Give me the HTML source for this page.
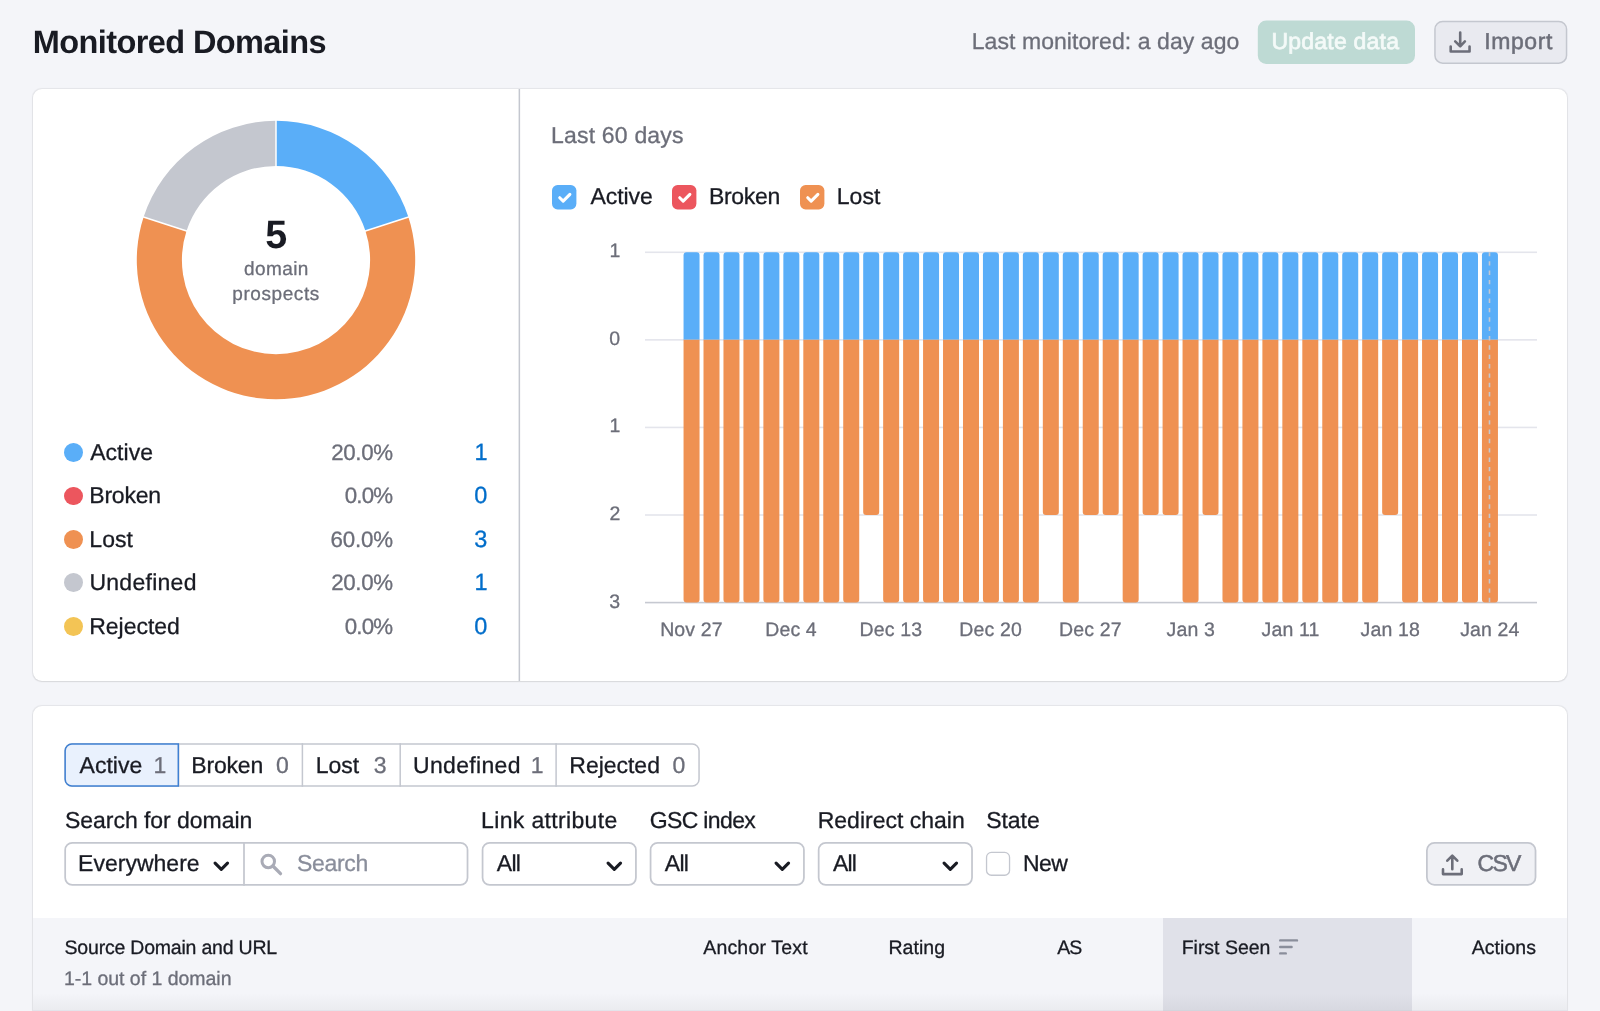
<!DOCTYPE html>
<html lang="en"><head><meta charset="utf-8"><title>Monitored Domains</title>
<style>
*{box-sizing:border-box;margin:0;padding:0}
html,body{width:1600px;height:1011px;overflow:hidden;background:#f4f5f9}
body{position:relative;font-family:"Liberation Sans",sans-serif;color:#191b23;font-size:22px}
.t{position:absolute;white-space:nowrap;line-height:1;-webkit-text-stroke:0.3px}
.g{color:#6c6e79}
.b{color:#006dca}
.card{position:absolute;background:#fff;border-radius:9px;box-shadow:0 0 1px 0.5px rgba(25,27,35,.07),0 1px 2px rgba(25,27,35,.07)}
.dot{position:absolute;width:18.8px;height:18.8px;border-radius:50%}
svg{position:absolute;left:0;top:0;overflow:visible}
#r{position:absolute;left:0;top:0;width:1600px;height:1011px;will-change:transform;text-rendering:geometricPrecision}
</style></head><body><div id="r">
<div class="card" style="left:32.75px;top:88.75px;width:1534.4px;height:592.25px"></div>
<div class="card" style="left:32.75px;top:706px;width:1534.4px;height:330px"></div>
<div style="position:absolute;left:32.75px;top:917.6px;width:1534.4px;height:93.4px;background:#f4f5f9;border-bottom:1px solid #e3e4eb"></div>
<div style="position:absolute;left:1162.8px;top:917.6px;width:249.2px;height:93.4px;background:#e0e1e9;border-bottom:1px solid #d3d5dd"></div>
<div style="position:absolute;left:33px;top:993px;width:1534px;height:17px;background:linear-gradient(to bottom,rgba(25,27,35,0),rgba(25,27,35,.045))"></div>
<svg width="1600" height="1011" viewBox="0 0 1600 1011">
<path fill="#5aaef8" d="M276.00 120.85A139.2 139.2 0 0 1 408.39 217.03L365.49 230.97A94.1 94.1 0 0 0 276.00 165.95Z"/><path fill="#ef9152" d="M408.39 217.03A139.2 139.2 0 1 1 143.61 217.03L186.51 230.97A94.1 94.1 0 1 0 365.49 230.97Z"/><path fill="#c4c7cf" d="M143.61 217.03A139.2 139.2 0 0 1 276.00 120.85L276.00 165.95A94.1 94.1 0 0 0 186.51 230.97Z"/><line x1="276.00" y1="166.95" x2="276.00" y2="119.85" stroke="#fff" stroke-width="1.5"/><line x1="364.54" y1="231.28" x2="409.34" y2="216.73" stroke="#fff" stroke-width="1.5"/><line x1="187.46" y1="231.28" x2="142.66" y2="216.73" stroke="#fff" stroke-width="1.5"/>
<rect x="645" y="251.50" width="892" height="1.6" fill="#e4e5ec"/><rect x="645" y="339.07" width="892" height="1.6" fill="#e4e5ec"/><rect x="645" y="426.64" width="892" height="1.6" fill="#e4e5ec"/><rect x="645" y="514.21" width="892" height="1.6" fill="#e4e5ec"/><rect x="645" y="601.78" width="892" height="1.6" fill="#c6c9d1"/><path fill="#5aaef8" d="M683.55 339.87V255.30a3 3 0 0 1 3 -3h10a3 3 0 0 1 3 3V339.87z"/><path fill="#ef9152" d="M683.55 339.87V599.58a3 3 0 0 0 3 3h10a3 3 0 0 0 3 -3V339.87z"/><path fill="#5aaef8" d="M703.51 339.87V255.30a3 3 0 0 1 3 -3h10a3 3 0 0 1 3 3V339.87z"/><path fill="#ef9152" d="M703.51 339.87V599.58a3 3 0 0 0 3 3h10a3 3 0 0 0 3 -3V339.87z"/><path fill="#5aaef8" d="M723.47 339.87V255.30a3 3 0 0 1 3 -3h10a3 3 0 0 1 3 3V339.87z"/><path fill="#ef9152" d="M723.47 339.87V599.58a3 3 0 0 0 3 3h10a3 3 0 0 0 3 -3V339.87z"/><path fill="#5aaef8" d="M743.43 339.87V255.30a3 3 0 0 1 3 -3h10a3 3 0 0 1 3 3V339.87z"/><path fill="#ef9152" d="M743.43 339.87V599.58a3 3 0 0 0 3 3h10a3 3 0 0 0 3 -3V339.87z"/><path fill="#5aaef8" d="M763.39 339.87V255.30a3 3 0 0 1 3 -3h10a3 3 0 0 1 3 3V339.87z"/><path fill="#ef9152" d="M763.39 339.87V599.58a3 3 0 0 0 3 3h10a3 3 0 0 0 3 -3V339.87z"/><path fill="#5aaef8" d="M783.35 339.87V255.30a3 3 0 0 1 3 -3h10a3 3 0 0 1 3 3V339.87z"/><path fill="#ef9152" d="M783.35 339.87V599.58a3 3 0 0 0 3 3h10a3 3 0 0 0 3 -3V339.87z"/><path fill="#5aaef8" d="M803.31 339.87V255.30a3 3 0 0 1 3 -3h10a3 3 0 0 1 3 3V339.87z"/><path fill="#ef9152" d="M803.31 339.87V599.58a3 3 0 0 0 3 3h10a3 3 0 0 0 3 -3V339.87z"/><path fill="#5aaef8" d="M823.27 339.87V255.30a3 3 0 0 1 3 -3h10a3 3 0 0 1 3 3V339.87z"/><path fill="#ef9152" d="M823.27 339.87V599.58a3 3 0 0 0 3 3h10a3 3 0 0 0 3 -3V339.87z"/><path fill="#5aaef8" d="M843.23 339.87V255.30a3 3 0 0 1 3 -3h10a3 3 0 0 1 3 3V339.87z"/><path fill="#ef9152" d="M843.23 339.87V599.58a3 3 0 0 0 3 3h10a3 3 0 0 0 3 -3V339.87z"/><path fill="#5aaef8" d="M863.19 339.87V255.30a3 3 0 0 1 3 -3h10a3 3 0 0 1 3 3V339.87z"/><path fill="#ef9152" d="M863.19 339.87V512.01a3 3 0 0 0 3 3h10a3 3 0 0 0 3 -3V339.87z"/><path fill="#5aaef8" d="M883.15 339.87V255.30a3 3 0 0 1 3 -3h10a3 3 0 0 1 3 3V339.87z"/><path fill="#ef9152" d="M883.15 339.87V599.58a3 3 0 0 0 3 3h10a3 3 0 0 0 3 -3V339.87z"/><path fill="#5aaef8" d="M903.11 339.87V255.30a3 3 0 0 1 3 -3h10a3 3 0 0 1 3 3V339.87z"/><path fill="#ef9152" d="M903.11 339.87V599.58a3 3 0 0 0 3 3h10a3 3 0 0 0 3 -3V339.87z"/><path fill="#5aaef8" d="M923.07 339.87V255.30a3 3 0 0 1 3 -3h10a3 3 0 0 1 3 3V339.87z"/><path fill="#ef9152" d="M923.07 339.87V599.58a3 3 0 0 0 3 3h10a3 3 0 0 0 3 -3V339.87z"/><path fill="#5aaef8" d="M943.03 339.87V255.30a3 3 0 0 1 3 -3h10a3 3 0 0 1 3 3V339.87z"/><path fill="#ef9152" d="M943.03 339.87V599.58a3 3 0 0 0 3 3h10a3 3 0 0 0 3 -3V339.87z"/><path fill="#5aaef8" d="M962.99 339.87V255.30a3 3 0 0 1 3 -3h10a3 3 0 0 1 3 3V339.87z"/><path fill="#ef9152" d="M962.99 339.87V599.58a3 3 0 0 0 3 3h10a3 3 0 0 0 3 -3V339.87z"/><path fill="#5aaef8" d="M982.95 339.87V255.30a3 3 0 0 1 3 -3h10a3 3 0 0 1 3 3V339.87z"/><path fill="#ef9152" d="M982.95 339.87V599.58a3 3 0 0 0 3 3h10a3 3 0 0 0 3 -3V339.87z"/><path fill="#5aaef8" d="M1002.91 339.87V255.30a3 3 0 0 1 3 -3h10a3 3 0 0 1 3 3V339.87z"/><path fill="#ef9152" d="M1002.91 339.87V599.58a3 3 0 0 0 3 3h10a3 3 0 0 0 3 -3V339.87z"/><path fill="#5aaef8" d="M1022.87 339.87V255.30a3 3 0 0 1 3 -3h10a3 3 0 0 1 3 3V339.87z"/><path fill="#ef9152" d="M1022.87 339.87V599.58a3 3 0 0 0 3 3h10a3 3 0 0 0 3 -3V339.87z"/><path fill="#5aaef8" d="M1042.83 339.87V255.30a3 3 0 0 1 3 -3h10a3 3 0 0 1 3 3V339.87z"/><path fill="#ef9152" d="M1042.83 339.87V512.01a3 3 0 0 0 3 3h10a3 3 0 0 0 3 -3V339.87z"/><path fill="#5aaef8" d="M1062.79 339.87V255.30a3 3 0 0 1 3 -3h10a3 3 0 0 1 3 3V339.87z"/><path fill="#ef9152" d="M1062.79 339.87V599.58a3 3 0 0 0 3 3h10a3 3 0 0 0 3 -3V339.87z"/><path fill="#5aaef8" d="M1082.75 339.87V255.30a3 3 0 0 1 3 -3h10a3 3 0 0 1 3 3V339.87z"/><path fill="#ef9152" d="M1082.75 339.87V512.01a3 3 0 0 0 3 3h10a3 3 0 0 0 3 -3V339.87z"/><path fill="#5aaef8" d="M1102.71 339.87V255.30a3 3 0 0 1 3 -3h10a3 3 0 0 1 3 3V339.87z"/><path fill="#ef9152" d="M1102.71 339.87V512.01a3 3 0 0 0 3 3h10a3 3 0 0 0 3 -3V339.87z"/><path fill="#5aaef8" d="M1122.67 339.87V255.30a3 3 0 0 1 3 -3h10a3 3 0 0 1 3 3V339.87z"/><path fill="#ef9152" d="M1122.67 339.87V599.58a3 3 0 0 0 3 3h10a3 3 0 0 0 3 -3V339.87z"/><path fill="#5aaef8" d="M1142.63 339.87V255.30a3 3 0 0 1 3 -3h10a3 3 0 0 1 3 3V339.87z"/><path fill="#ef9152" d="M1142.63 339.87V512.01a3 3 0 0 0 3 3h10a3 3 0 0 0 3 -3V339.87z"/><path fill="#5aaef8" d="M1162.59 339.87V255.30a3 3 0 0 1 3 -3h10a3 3 0 0 1 3 3V339.87z"/><path fill="#ef9152" d="M1162.59 339.87V512.01a3 3 0 0 0 3 3h10a3 3 0 0 0 3 -3V339.87z"/><path fill="#5aaef8" d="M1182.55 339.87V255.30a3 3 0 0 1 3 -3h10a3 3 0 0 1 3 3V339.87z"/><path fill="#ef9152" d="M1182.55 339.87V599.58a3 3 0 0 0 3 3h10a3 3 0 0 0 3 -3V339.87z"/><path fill="#5aaef8" d="M1202.51 339.87V255.30a3 3 0 0 1 3 -3h10a3 3 0 0 1 3 3V339.87z"/><path fill="#ef9152" d="M1202.51 339.87V512.01a3 3 0 0 0 3 3h10a3 3 0 0 0 3 -3V339.87z"/><path fill="#5aaef8" d="M1222.47 339.87V255.30a3 3 0 0 1 3 -3h10a3 3 0 0 1 3 3V339.87z"/><path fill="#ef9152" d="M1222.47 339.87V599.58a3 3 0 0 0 3 3h10a3 3 0 0 0 3 -3V339.87z"/><path fill="#5aaef8" d="M1242.43 339.87V255.30a3 3 0 0 1 3 -3h10a3 3 0 0 1 3 3V339.87z"/><path fill="#ef9152" d="M1242.43 339.87V599.58a3 3 0 0 0 3 3h10a3 3 0 0 0 3 -3V339.87z"/><path fill="#5aaef8" d="M1262.39 339.87V255.30a3 3 0 0 1 3 -3h10a3 3 0 0 1 3 3V339.87z"/><path fill="#ef9152" d="M1262.39 339.87V599.58a3 3 0 0 0 3 3h10a3 3 0 0 0 3 -3V339.87z"/><path fill="#5aaef8" d="M1282.35 339.87V255.30a3 3 0 0 1 3 -3h10a3 3 0 0 1 3 3V339.87z"/><path fill="#ef9152" d="M1282.35 339.87V599.58a3 3 0 0 0 3 3h10a3 3 0 0 0 3 -3V339.87z"/><path fill="#5aaef8" d="M1302.31 339.87V255.30a3 3 0 0 1 3 -3h10a3 3 0 0 1 3 3V339.87z"/><path fill="#ef9152" d="M1302.31 339.87V599.58a3 3 0 0 0 3 3h10a3 3 0 0 0 3 -3V339.87z"/><path fill="#5aaef8" d="M1322.27 339.87V255.30a3 3 0 0 1 3 -3h10a3 3 0 0 1 3 3V339.87z"/><path fill="#ef9152" d="M1322.27 339.87V599.58a3 3 0 0 0 3 3h10a3 3 0 0 0 3 -3V339.87z"/><path fill="#5aaef8" d="M1342.23 339.87V255.30a3 3 0 0 1 3 -3h10a3 3 0 0 1 3 3V339.87z"/><path fill="#ef9152" d="M1342.23 339.87V599.58a3 3 0 0 0 3 3h10a3 3 0 0 0 3 -3V339.87z"/><path fill="#5aaef8" d="M1362.19 339.87V255.30a3 3 0 0 1 3 -3h10a3 3 0 0 1 3 3V339.87z"/><path fill="#ef9152" d="M1362.19 339.87V599.58a3 3 0 0 0 3 3h10a3 3 0 0 0 3 -3V339.87z"/><path fill="#5aaef8" d="M1382.15 339.87V255.30a3 3 0 0 1 3 -3h10a3 3 0 0 1 3 3V339.87z"/><path fill="#ef9152" d="M1382.15 339.87V512.01a3 3 0 0 0 3 3h10a3 3 0 0 0 3 -3V339.87z"/><path fill="#5aaef8" d="M1402.11 339.87V255.30a3 3 0 0 1 3 -3h10a3 3 0 0 1 3 3V339.87z"/><path fill="#ef9152" d="M1402.11 339.87V599.58a3 3 0 0 0 3 3h10a3 3 0 0 0 3 -3V339.87z"/><path fill="#5aaef8" d="M1422.07 339.87V255.30a3 3 0 0 1 3 -3h10a3 3 0 0 1 3 3V339.87z"/><path fill="#ef9152" d="M1422.07 339.87V599.58a3 3 0 0 0 3 3h10a3 3 0 0 0 3 -3V339.87z"/><path fill="#5aaef8" d="M1442.03 339.87V255.30a3 3 0 0 1 3 -3h10a3 3 0 0 1 3 3V339.87z"/><path fill="#ef9152" d="M1442.03 339.87V599.58a3 3 0 0 0 3 3h10a3 3 0 0 0 3 -3V339.87z"/><path fill="#5aaef8" d="M1461.99 339.87V255.30a3 3 0 0 1 3 -3h10a3 3 0 0 1 3 3V339.87z"/><path fill="#ef9152" d="M1461.99 339.87V599.58a3 3 0 0 0 3 3h10a3 3 0 0 0 3 -3V339.87z"/><path fill="#5aaef8" d="M1481.95 339.87V255.30a3 3 0 0 1 3 -3h10a3 3 0 0 1 3 3V339.87z"/><path fill="#ef9152" d="M1481.95 339.87V599.58a3 3 0 0 0 3 3h10a3 3 0 0 0 3 -3V339.87z"/><line x1="1489.5" y1="252.3" x2="1489.5" y2="602.6" stroke="#c4c7cf" stroke-width="1.6" stroke-dasharray="4.4 4.95" stroke-dashoffset="0.45"/>
<rect x="518.60" y="89" width="1.5" height="592" fill="#c4c7cf"/>
<rect x="1258.55" y="21.35" width="155.70" height="41.80" rx="7.75" fill="#bedad4" stroke="#bedad4" stroke-width="1.5"/>
<rect x="1434.95" y="21.55" width="131.60" height="41.60" rx="7.75" fill="#e9eaf0" stroke="#c4c7cf" stroke-width="1.5"/>
<rect x="65.15" y="743.95" width="633.90" height="42.10" rx="6.75" fill="#fff" stroke="#c4c7cf" stroke-width="1.5"/>
<rect x="177.85" y="743.2" width="1.5" height="43.59999999999991" fill="#c4c7cf"/>
<rect x="301.65" y="743.2" width="1.5" height="43.59999999999991" fill="#c4c7cf"/>
<rect x="399.45" y="743.2" width="1.5" height="43.59999999999991" fill="#c4c7cf"/>
<rect x="555.35" y="743.2" width="1.5" height="43.59999999999991" fill="#c4c7cf"/>
<path d="M178.3 743.95H71.9a6.75 6.75 0 0 0 -6.75 6.75v28.6a6.75 6.75 0 0 0 6.75 6.75H178.3z" fill="#e9f1fd" stroke="#3f80d2" stroke-width="1.5"/>
<rect x="65.17" y="842.88" width="402.35" height="42.00" rx="7.12" fill="#fff" stroke="#c4c7cf" stroke-width="1.75"/>
<rect x="243.12" y="842.0" width="1.75" height="43.75" fill="#c4c7cf"/>
<rect x="482.57" y="842.88" width="153.35" height="42.00" rx="7.12" fill="#fff" stroke="#c4c7cf" stroke-width="1.75"/>
<rect x="650.57" y="842.88" width="153.35" height="42.00" rx="7.12" fill="#fff" stroke="#c4c7cf" stroke-width="1.75"/>
<rect x="818.67" y="842.88" width="153.35" height="42.00" rx="7.12" fill="#fff" stroke="#c4c7cf" stroke-width="1.75"/>
<rect x="986.55" y="852.45" width="23.00" height="22.80" rx="4.85" fill="#fff" stroke="#c4c7cf" stroke-width="1.3"/>
<rect x="1426.88" y="842.88" width="108.65" height="42.00" rx="7.62" fill="#f0f1f5" stroke="#c4c7cf" stroke-width="1.75"/>
<g fill="none" stroke="#6c6e79" stroke-width="2.6" stroke-linecap="round" stroke-linejoin="round"><path d="M1460.2 32.6V46.2M1455.2 41.4l5 4.9 4.7-4.9M1450.7 46.6V51.55H1469.55V46.6"/><path d="M1452.3 855.8V869.2M1447.3 860.7l5-5.1 5 5.1M1443 869.4V874.1H1461.7V869.4"/></g>
</svg>
<div class="t" style="left:32.74px;top:26.00px;font-size:32.5px;letter-spacing:-0.59px;font-weight:700;-webkit-text-stroke:0">Monitored Domains</div>
<div class="t g" style="left:971.71px;top:30.00px;font-size:23px;letter-spacing:0.07px">Last monitored: a day ago</div>
<div class="t" style="left:1271.43px;top:30.00px;font-size:23px;letter-spacing:0.22px;color:#f4faf8;-webkit-text-stroke:0.7px #f4faf8">Update data</div>
<div class="t g" style="left:1484.18px;top:30.00px;font-size:23px;letter-spacing:0.62px;-webkit-text-stroke:0.5px #6c6e79">Import</div>
<div class="t" style="left:265.14px;top:216.00px;font-size:39.5px;letter-spacing:0.00px;font-weight:700;-webkit-text-stroke:0">5</div>
<div class="t g" style="left:243.99px;top:260.00px;font-size:19px;letter-spacing:0.42px">domain</div>
<div class="t g" style="left:232.31px;top:285.00px;font-size:19px;letter-spacing:0.58px">prospects</div>
<div class="dot" style="left:64.2px;top:443.2px;background:#5aaef8"></div>
<div class="t" style="left:90.15px;top:441.00px;font-size:23px;letter-spacing:0.05px">Active</div>
<div class="t g" style="left:331.23px;top:442.00px;font-size:22.3px;letter-spacing:-0.33px">20.0%</div>
<div class="t b" style="left:474.41px;top:441.00px;font-size:23.5px;letter-spacing:0.00px">1</div>
<div class="dot" style="left:64.2px;top:486.6px;background:#ec565e"></div>
<div class="t" style="left:89.31px;top:484.00px;font-size:23px;letter-spacing:-0.23px">Broken</div>
<div class="t g" style="left:344.67px;top:485.00px;font-size:22.3px;letter-spacing:-0.79px">0.0%</div>
<div class="t b" style="left:474.18px;top:484.00px;font-size:23.5px;letter-spacing:0.00px">0</div>
<div class="dot" style="left:64.2px;top:530.0px;background:#ef9152"></div>
<div class="t" style="left:89.31px;top:528.00px;font-size:23px;letter-spacing:0.06px">Lost</div>
<div class="t g" style="left:330.43px;top:529.00px;font-size:22.3px;letter-spacing:-0.13px">60.0%</div>
<div class="t b" style="left:474.30px;top:528.00px;font-size:23.5px;letter-spacing:0.00px">3</div>
<div class="dot" style="left:64.2px;top:573.4px;background:#c4c7cf"></div>
<div class="t" style="left:89.43px;top:571.00px;font-size:23px;letter-spacing:0.27px">Undefined</div>
<div class="t g" style="left:331.23px;top:572.00px;font-size:22.3px;letter-spacing:-0.33px">20.0%</div>
<div class="t b" style="left:474.41px;top:571.00px;font-size:23.5px;letter-spacing:0.00px">1</div>
<div class="dot" style="left:64.2px;top:616.8px;background:#f3c455"></div>
<div class="t" style="left:89.31px;top:615.00px;font-size:23px;letter-spacing:-0.04px">Rejected</div>
<div class="t g" style="left:344.67px;top:616.00px;font-size:22.3px;letter-spacing:-0.79px">0.0%</div>
<div class="t b" style="left:474.18px;top:615.00px;font-size:23.5px;letter-spacing:0.00px">0</div>
<div class="t g" style="left:551.11px;top:124.00px;font-size:23px;letter-spacing:0.18px">Last 60 days</div>
<svg width="24.4" height="24.4" viewBox="0 0 24 24" style="left:551.7px;top:184.8px"><rect width="24" height="24" rx="5.5" fill="#5aaef8"/><path d="M7.6 12.5l3.4 3.4 6.6-6.7" fill="none" stroke="#fff" stroke-width="3" stroke-linecap="round" stroke-linejoin="round"/></svg>
<div class="t" style="left:590.45px;top:185.00px;font-size:23px;letter-spacing:-0.05px">Active</div>
<svg width="24.4" height="24.4" viewBox="0 0 24 24" style="left:672.1px;top:184.8px"><rect width="24" height="24" rx="5.5" fill="#ec565e"/><path d="M7.6 12.5l3.4 3.4 6.6-6.7" fill="none" stroke="#fff" stroke-width="3" stroke-linecap="round" stroke-linejoin="round"/></svg>
<div class="t" style="left:708.91px;top:185.00px;font-size:23px;letter-spacing:-0.28px">Broken</div>
<svg width="24.4" height="24.4" viewBox="0 0 24 24" style="left:799.9px;top:184.8px"><rect width="24" height="24" rx="5.5" fill="#ef9152"/><path d="M7.6 12.5l3.4 3.4 6.6-6.7" fill="none" stroke="#fff" stroke-width="3" stroke-linecap="round" stroke-linejoin="round"/></svg>
<div class="t" style="left:836.71px;top:185.00px;font-size:23px;letter-spacing:0.09px">Lost</div>
<div class="t g" style="left:609.46px;top:242.00px;font-size:19.5px;letter-spacing:0.00px">1</div>
<div class="t g" style="left:609.26px;top:330.00px;font-size:19.5px;letter-spacing:0.00px">0</div>
<div class="t g" style="left:609.46px;top:417.00px;font-size:19.5px;letter-spacing:0.00px">1</div>
<div class="t g" style="left:609.45px;top:505.00px;font-size:19.5px;letter-spacing:0.00px">2</div>
<div class="t g" style="left:609.36px;top:593.00px;font-size:19.5px;letter-spacing:0.00px">3</div>
<div class="t g" style="left:660.13px;top:621.00px;font-size:19.5px;letter-spacing:0.15px">Nov 27</div>
<div class="t g" style="left:765.17px;top:621.00px;font-size:19.5px;letter-spacing:0.15px">Dec 4</div>
<div class="t g" style="left:859.58px;top:621.00px;font-size:19.5px;letter-spacing:0.15px">Dec 13</div>
<div class="t g" style="left:959.28px;top:621.00px;font-size:19.5px;letter-spacing:0.15px">Dec 20</div>
<div class="t g" style="left:1059.12px;top:621.00px;font-size:19.5px;letter-spacing:0.15px">Dec 27</div>
<div class="t g" style="left:1166.56px;top:621.00px;font-size:19.5px;letter-spacing:0.15px">Jan 3</div>
<div class="t g" style="left:1261.60px;top:621.00px;font-size:19.5px;letter-spacing:0.15px">Jan 11</div>
<div class="t g" style="left:1360.57px;top:621.00px;font-size:19.5px;letter-spacing:0.15px">Jan 18</div>
<div class="t g" style="left:1460.17px;top:621.00px;font-size:19.5px;letter-spacing:0.15px">Jan 24</div>
<div class="t" style="left:79.55px;top:754.00px;font-size:23px;letter-spacing:0.01px">Active</div>
<div class="t g" style="left:153.47px;top:754.00px;font-size:23px;letter-spacing:0.00px">1</div>
<div class="t" style="left:191.31px;top:754.00px;font-size:23px;letter-spacing:-0.19px">Broken</div>
<div class="t g" style="left:276.07px;top:754.00px;font-size:23px;letter-spacing:0.00px">0</div>
<div class="t" style="left:315.71px;top:754.00px;font-size:23px;letter-spacing:-0.01px">Lost</div>
<div class="t g" style="left:373.82px;top:754.00px;font-size:23px;letter-spacing:0.00px">3</div>
<div class="t" style="left:413.02px;top:754.00px;font-size:23px;letter-spacing:0.32px">Undefined</div>
<div class="t g" style="left:530.87px;top:754.00px;font-size:23px;letter-spacing:0.00px">1</div>
<div class="t" style="left:569.31px;top:754.00px;font-size:23px;letter-spacing:-0.02px">Rejected</div>
<div class="t g" style="left:672.57px;top:754.00px;font-size:23px;letter-spacing:0.00px">0</div>
<div class="t" style="left:65.02px;top:809.00px;font-size:23px;letter-spacing:-0.04px">Search for domain</div>
<div class="t" style="left:481.11px;top:809.00px;font-size:23px;letter-spacing:0.34px">Link attribute</div>
<div class="t" style="left:649.70px;top:809.00px;font-size:23px;letter-spacing:-0.64px">GSC index</div>
<div class="t" style="left:817.71px;top:809.00px;font-size:23px;letter-spacing:-0.00px">Redirect chain</div>
<div class="t" style="left:986.22px;top:809.00px;font-size:23px;letter-spacing:-0.04px">State</div>
<div class="t" style="left:78.11px;top:852.00px;font-size:23px;letter-spacing:0.01px">Everywhere</div>
<svg width="16.6" height="10.4" viewBox="0 0 16 10" style="left:213.4px;top:861.3px"><path d="M2 2l6 6 6-6" fill="none" stroke="#191b23" stroke-width="3" stroke-linecap="round" stroke-linejoin="round"/></svg>
<svg width="24" height="24" viewBox="0 0 24 24" style="left:259px;top:852.3px"><circle cx="9.25" cy="9.4" r="6.25" fill="none" stroke="#a9abb6" stroke-width="3"/><path d="M13.9 14l7.6 7.7" stroke="#a9abb6" stroke-width="3.3" stroke-linecap="round"/></svg>
<div class="t" style="left:297.01px;top:852.00px;font-size:23px;letter-spacing:-0.34px;color:#8a8e9b">Search</div>
<div class="t" style="left:496.85px;top:852.00px;font-size:23px;letter-spacing:-0.78px">All</div>
<svg width="16.6" height="10.4" viewBox="0 0 16 10" style="left:605.6px;top:861.3px"><path d="M2 2l6 6 6-6" fill="none" stroke="#191b23" stroke-width="3" stroke-linecap="round" stroke-linejoin="round"/></svg>
<div class="t" style="left:664.85px;top:852.00px;font-size:23px;letter-spacing:-0.78px">All</div>
<svg width="16.6" height="10.4" viewBox="0 0 16 10" style="left:773.5999999999999px;top:861.3px"><path d="M2 2l6 6 6-6" fill="none" stroke="#191b23" stroke-width="3" stroke-linecap="round" stroke-linejoin="round"/></svg>
<div class="t" style="left:832.95px;top:852.00px;font-size:23px;letter-spacing:-0.78px">All</div>
<svg width="16.6" height="10.4" viewBox="0 0 16 10" style="left:941.6999999999999px;top:861.3px"><path d="M2 2l6 6 6-6" fill="none" stroke="#191b23" stroke-width="3" stroke-linecap="round" stroke-linejoin="round"/></svg>
<div class="t" style="left:1022.91px;top:852.00px;font-size:23px;letter-spacing:-0.49px">New</div>
<div class="t g" style="left:1477.50px;top:852.00px;font-size:23px;letter-spacing:-1.71px;-webkit-text-stroke:0.5px #6c6e79">CSV</div>
<div class="t" style="left:64.57px;top:939.00px;font-size:19.5px;letter-spacing:-0.21px">Source Domain and URL</div>
<div class="t g" style="left:63.99px;top:970.00px;font-size:19.5px;letter-spacing:-0.03px">1-1 out of 1 domain</div>
<div class="t" style="left:703.25px;top:939.00px;font-size:19.5px;letter-spacing:0.17px">Anchor Text</div>
<div class="t" style="left:888.49px;top:939.00px;font-size:19.5px;letter-spacing:0.05px">Rating</div>
<div class="t" style="left:1057.27px;top:939.00px;font-size:19.5px;letter-spacing:-0.90px">AS</div>
<div class="t" style="left:1181.69px;top:939.00px;font-size:19.5px;letter-spacing:-0.02px">First Seen</div>
<div class="t" style="left:1471.65px;top:939.00px;font-size:19.5px;letter-spacing:0.07px">Actions</div>
<svg width="20" height="16" viewBox="0 0 20 16" style="left:1279.2px;top:939.2px"><path d="M1.2 1.4h16.8M1.2 8h11.4M1.2 14.4h5.6" stroke="#8a8e9b" stroke-width="2.4" stroke-linecap="round"/></svg>
</div></body></html>
